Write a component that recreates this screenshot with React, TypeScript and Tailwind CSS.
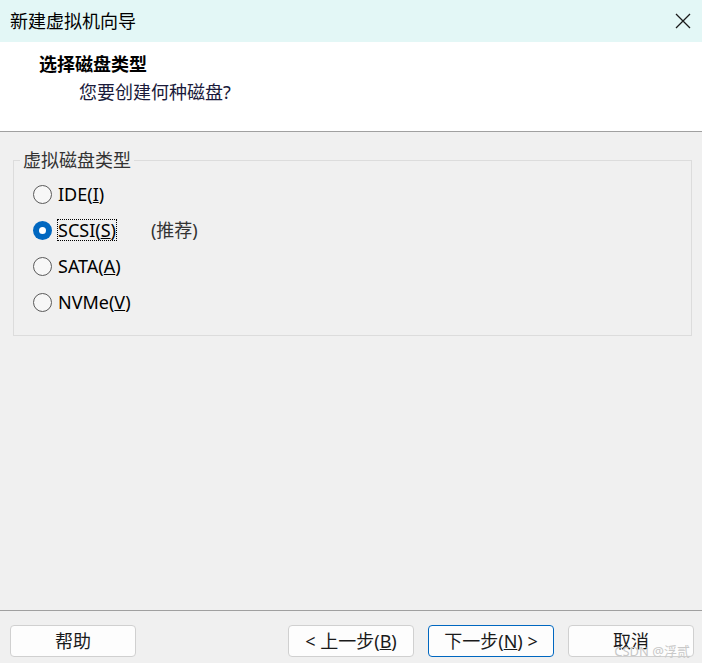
import React, { useState } from 'react';

const font = '[font-family:"Noto_Sans","Noto_Sans_CJK_SC",sans-serif]';

type DiskType = { id: string; label: string; key: string; hint?: string };

const diskTypes: DiskType[] = [
    { id: 'ide', label: 'IDE(', key: 'I' },
    { id: 'scsi', label: 'SCSI(', key: 'S', hint: '(推荐)' },
    { id: 'sata', label: 'SATA(', key: 'A' },
    { id: 'nvme', label: 'NVMe(', key: 'V' },
];

const Radio: React.FC<{ checked: boolean }> = ({ checked }) =>
    checked ? (
        <span className="w-[19px] h-[19px] rounded-full bg-[#0067c0] flex items-center justify-center">
            <span className="w-[7px] h-[7px] rounded-full bg-white" />
        </span>
    ) : (
        <span className="w-[19px] h-[19px] rounded-full border border-[#5a5a5a] bg-[#f7f7f7]" />
    );

const Button: React.FC<{ primary?: boolean; children: React.ReactNode }> = ({ primary, children }) => (
    <button
        className={
            'w-[126px] h-[32px] rounded-[4px] bg-[#fdfdfd] text-[18px] text-[#1a1a1a] flex items-center justify-center ' +
            (primary ? 'border border-[#0067c0]' : 'border border-[#d0d0d0]')
        }
    >
        {children}
    </button>
);

const App: React.FC = () => {
    const [selected, setSelected] = useState('scsi');

    return (
        <div className={`w-[702px] h-[663px] bg-[#f0f0f0] flex flex-col relative ${font}`}>
            {/* title bar */}
            <div className="h-[42px] bg-[#e3f7f6] flex items-center justify-between pl-[10px] pr-[10px]">
                <span className="text-[18px] text-black leading-none">新建虚拟机向导</span>
                <svg width="16" height="16" viewBox="0 0 16 16" className="mr-[1px]">
                    <path d="M1 1L15 15M15 1L1 15" stroke="#1a1a1a" strokeWidth="1.3" />
                </svg>
            </div>

            {/* header */}
            <div className="h-[90px] bg-white border-b border-[#a0a0a0] pt-[11px]">
                <div className="pl-[39px] text-[18px] font-bold text-black leading-[22px]">选择磁盘类型</div>
                <div className="pl-[79px] mt-[6px] text-[18px] text-[#1a1a3a] leading-[22px]">您要创建何种磁盘?</div>
            </div>

            {/* body */}
            <div className="flex-1 pt-[18px] pl-[13px] pr-[10px]">
                <fieldset className="h-[186px] border border-[#dcdcdc] px-[6px]">
                    <legend className="px-[3px] text-[18px] text-[#333] leading-[20px]">虚拟磁盘类型</legend>
                    <div className="flex flex-col pt-[6px] pl-[13px]">
                        {diskTypes.map((d) => (
                            <div
                                key={d.id}
                                className="h-[36px] flex items-center cursor-default"
                                onClick={() => setSelected(d.id)}
                            >
                                <Radio checked={selected === d.id} />
                                <span
                                    className={
                                        'ml-[5px] text-[18px] text-black leading-[20px] ' +
                                        (selected === d.id ? 'border border-dotted border-black' : 'border border-transparent')
                                    }
                                >
                                    {d.label}
                                    <u>{d.key}</u>)
                                </span>
                                {d.hint && <span className="ml-[34px] text-[18px] text-[#333]">{d.hint}</span>}
                            </div>
                        ))}
                    </div>
                </fieldset>
            </div>

            {/* footer */}
            <div className="h-[53px] border-t border-[#a0a0a0] pt-[14px] pl-[10px] pr-[8px] flex items-start">
                <Button>帮助</Button>
                <div className="flex-1" />
                <div className="flex gap-[14px]">
                    <Button>
                        &lt; 上一步(<u>B</u>)
                    </Button>
                    <Button primary>
                        下一步(<u>N</u>) &gt;
                    </Button>
                    <Button>取消</Button>
                </div>
            </div>

            <span className="absolute right-[12px] bottom-[5px] text-[13px] text-[#c8c8c8] leading-none">
                CSDN @浮贰
            </span>
        </div>
    );
};

export default App;
